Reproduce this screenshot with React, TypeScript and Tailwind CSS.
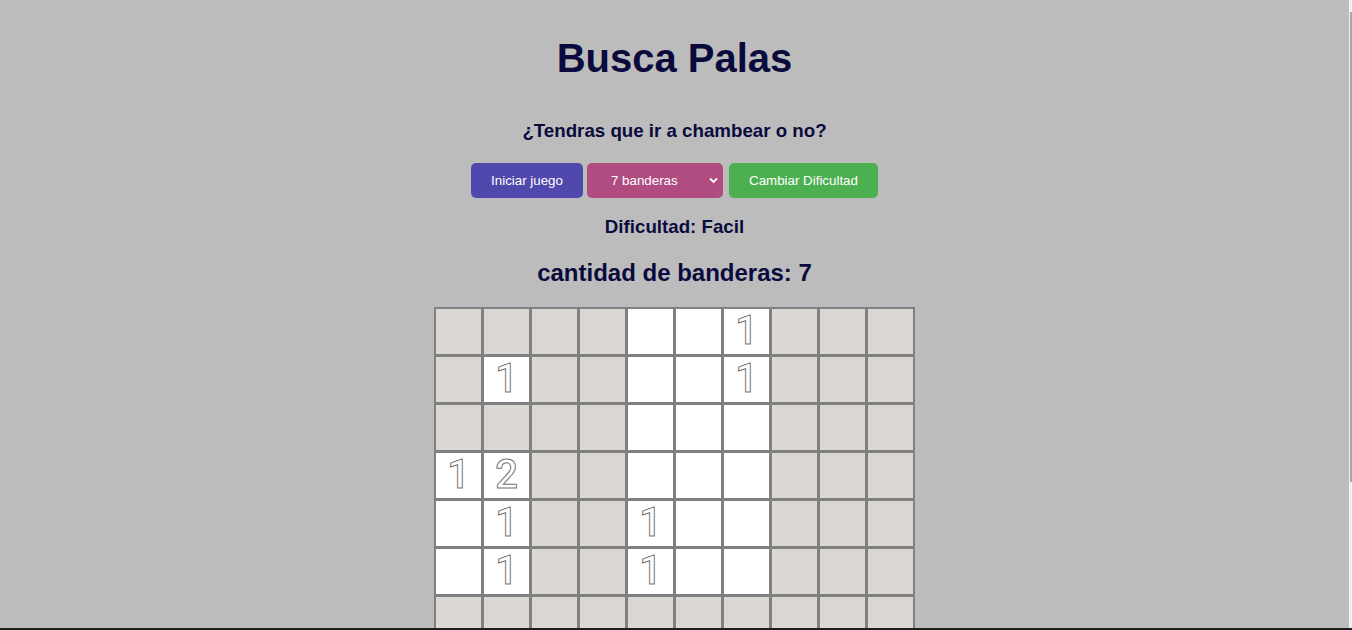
import React from "react";

type Cell = { open: boolean; n?: number };

const rows: Cell[][] = [
  "GGGGWW1GGG",
  "G1GGWW1GGG",
  "GGGGWWWGGG",
  "12GGWWWGGG",
  "W1GG1WWGGG",
  "W1GG1WWGGG",
  "GGGGGGGGGG",
  "GGGGGGGGGG",
  "GGGGGGGGGG",
  "GGGGGGGGGG",
].map((r) =>
  r.split("").map((ch) => {
    if (ch === "G") return { open: false };
    if (ch === "W") return { open: true };
    return { open: true, n: Number(ch) };
  })
);

export default function App() {
  return (
    <div className="relative h-[630px] w-[1352px] overflow-hidden bg-[#bcbcbc] font-['Liberation_Sans',Arial,sans-serif] text-[#0b0a3c]">
      <div className="flex w-[1349px] flex-col items-center">
        <h1 className="mt-[35px] text-[40px] font-bold leading-[46px]">Busca Palas</h1>
        <h3 className="mt-[39px] text-[18.72px] font-bold leading-[22px]">
          ¿Tendras que ir a chambear o no?
        </h3>
        <div className="mt-[21px] flex items-center">
          <button className="h-[35px] w-[112px] rounded-[5px] bg-[#5048ad] text-[13.33px] text-white">
            Iniciar juego
          </button>
          <div className="relative ml-[4px]">
            <select
              defaultValue="7"
              className="h-[35px] w-[136px] appearance-none rounded-[5px] bg-[#b04c80] pl-[24px] text-[13.33px] text-white outline-none"
            >
              <option value="7">7 banderas</option>
              <option value="10">10 banderas</option>
              <option value="15">15 banderas</option>
            </select>
            <svg
              className="pointer-events-none absolute right-[5px] top-[14px]"
              width="9"
              height="7"
              viewBox="0 0 9 7"
            >
              <path d="M1 1.5 L4.5 5 L8 1.5" stroke="#ffffff" strokeWidth="1.8" fill="none" />
            </svg>
          </div>
          <button className="ml-[6px] h-[35px] w-[149px] rounded-[5px] bg-[#4caf50] text-[13.33px] text-white">
            Cambiar Dificultad
          </button>
        </div>
        <h3 className="mt-[18px] text-[18.72px] font-bold leading-[22px]">Dificultad: Facil</h3>
        <h2 className="mt-[21px] text-[24px] font-bold leading-[28px]">cantidad de banderas: 7</h2>
        <div className="mt-[20px] grid grid-cols-[repeat(10,45px)] gap-[3px] bg-[#808080] p-[2px]">
          {rows.flatMap((row, ri) =>
            row.map((c, ci) => (
              <div
                key={`${ri}-${ci}`}
                className={`flex h-[45px] w-[45px] items-center justify-center ${
                  c.open ? "bg-white" : "bg-[#dbd8d3]"
                }`}
              >
                {c.n ? (
                  <span className="mt-[-1px] font-['Roboto',sans-serif] text-[40px] font-medium leading-none text-white [-webkit-text-stroke:1px_#777777]">
                    {c.n}
                  </span>
                ) : null}
              </div>
            ))
          )}
        </div>
      </div>
      <div className="absolute right-0 top-0 h-[630px] w-[3px] bg-[#f1f1f1]">
        <div className="ml-[1px] mt-[12px] h-[470px] w-[2px] bg-[#a8a8a8]" />
      </div>
      <div className="absolute bottom-0 left-0 h-[2px] w-[1352px] bg-[#1e1e1e]" />
    </div>
  );
}
